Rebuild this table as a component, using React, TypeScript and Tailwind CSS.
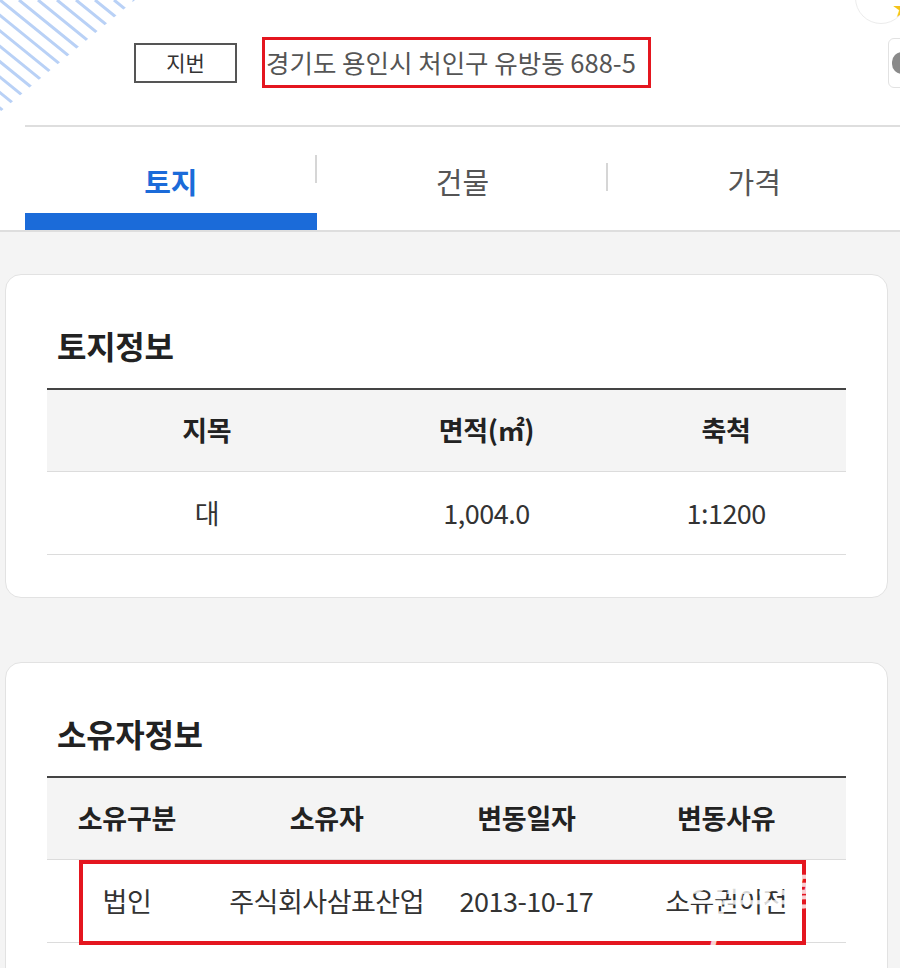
import React from "react";

const font = { fontFamily: '"Noto Sans CJK KR", "Noto Sans", sans-serif' };

function Hatch() {
  const lines = [];
  for (let i = -8; i < 14; i++) {
    const x0 = i * 19;
    lines.push(<line key={i} x1={x0} y1={0} x2={x0 + 160} y2={130} stroke="#b9d1f6" strokeWidth="3" />);
  }
  return (
    <svg className="absolute left-0 top-0" width="140" height="120" viewBox="0 0 140 120">
      <defs>
        <clipPath id="tri">
          <polygon points="0,0 135,0 0,112" />
        </clipPath>
      </defs>
      <g clipPath="url(#tri)">{lines}</g>
    </svg>
  );
}

function Card({ title, children }: { title: string; children: React.ReactNode }) {
  return (
    <div className="ml-[5px] mr-[12px] rounded-[16px] border border-[#e2e2e2] bg-white px-[41px] pt-[42px] pb-[42px]">
      <div className="flex h-[56px] items-center pl-[10px] text-[32px] font-bold tracking-[-0.3px] text-[#222]">{title}</div>
      <div className="mt-[15px]">{children}</div>
    </div>
  );
}

export default function App() {
  return (
    <div className="relative h-[968px] w-[900px] overflow-hidden bg-[#f4f4f4]" style={font}>
      <div className="relative bg-white">
        <Hatch />
        {/* right edge decorations */}
        <div className="absolute left-[855px] top-[-28px] h-[52px] w-[52px] rounded-full border border-[#ececec]" />
        <div className="absolute left-[893px] top-[-2px] text-[20px] leading-none text-[#f5c21b]">★</div>
        <div className="absolute left-[888px] top-[38px] flex h-[50px] w-[40px] items-center rounded-[6px] border border-[#e2e2e2] pl-[3px]">
          <div className="h-[22px] w-[10px] rounded-l-full bg-[#8a8a8a]" />
        </div>

        <div className="flex h-[125px] items-center pl-[134px]">
          <div className="flex h-[40px] w-[103px] items-center justify-center border-2 border-[#555] text-[21px] text-[#333]">지번</div>
          <div className="ml-[25px] flex h-[51px] items-center border-[3px] border-[#e4161f] pl-[1px] pr-[12px] text-[25.5px] text-[#555]">
            경기도 용인시 처인구 유방동 688-5
          </div>
        </div>
        <div className="ml-[25px] h-[2px] bg-[#dedede]" />
        <div className="ml-[25px] flex h-[103px]">
          <div className="relative flex flex-1 items-center justify-center pt-[6px] text-[29px] font-bold text-[#1b6bd9]">
            토지
            <div className="absolute bottom-0 left-0 right-0 h-[17px] bg-[#1b6bd9]" />
            <div className="absolute right-0 top-[28px] h-[28px] w-[2px] bg-[#d6d6d6]" />
          </div>
          <div className="relative flex flex-1 items-center justify-center pt-[6px] text-[29px] text-[#555]">
            건물
            <div className="absolute right-0 top-[36px] h-[28px] w-[2px] bg-[#d6d6d6]" />
          </div>
          <div className="flex flex-1 items-center justify-center pt-[6px] text-[29px] text-[#555]">가격</div>
        </div>
        <div className="h-[2px] bg-[#dedede]" />
      </div>

      <div className="pt-[42px]">
        <Card title="토지정보">
          <div className="border-t-2 border-[#444]">
            <div className="grid h-[82px] grid-cols-[40%_30%_30%] items-center border-b border-[#dcdcdc] bg-[#f4f4f4] text-center text-[27px] font-bold tracking-[-0.3px] text-[#222]">
              <div>지목</div>
              <div>면적(㎡)</div>
              <div>축척</div>
            </div>
            <div className="grid h-[83px] grid-cols-[40%_30%_30%] items-center border-b border-[#dcdcdc] text-center text-[27px] tracking-[-0.5px] text-[#333]">
              <div>대</div>
              <div>1,004.0</div>
              <div>1:1200</div>
            </div>
          </div>
        </Card>

        <div className="h-[64px]" />

        <Card title="소유자정보">
          <div className="relative border-t-2 border-[#444]">
            <div className="grid h-[82px] grid-cols-[20%_30%_20%_30%] items-center border-b border-[#dcdcdc] bg-[#f4f4f4] text-center text-[27px] font-bold tracking-[-0.3px] text-[#222]">
              <div>소유구분</div>
              <div>소유자</div>
              <div>변동일자</div>
              <div>변동사유</div>
            </div>
            <div className="grid h-[83px] grid-cols-[20%_30%_20%_30%] items-center border-b border-[#dcdcdc] text-center text-[27px] tracking-[-0.5px] text-[#333]">
              <div>법인</div>
              <div>주식회사삼표산업</div>
              <div>2013-10-17</div>
              <div>소유권이전</div>
            </div>
            <div className="pointer-events-none absolute left-[32px] top-[82px] h-[85px] w-[727px] border-[4px] border-[#e4161f]" />
            <div className="pointer-events-none absolute left-[640px] top-[92px] text-[38px] font-bold italic leading-none tracking-[-2px] text-white opacity-80">
              스포츠동아
            </div>
          </div>
        </Card>
      </div>
    </div>
  );
}
